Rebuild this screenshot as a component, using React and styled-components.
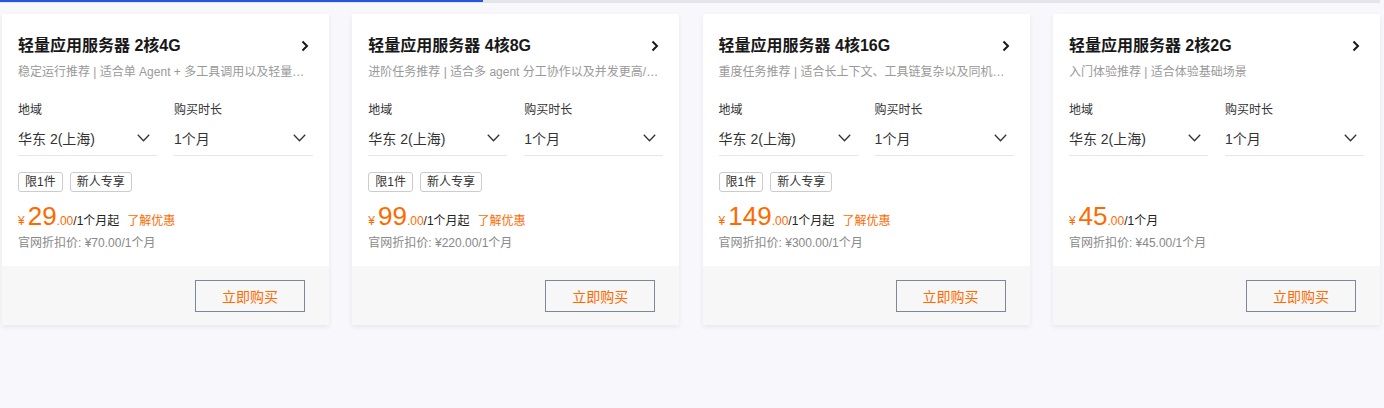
import React from 'react';
import styled, { createGlobalStyle } from 'styled-components';

const GlobalStyle = createGlobalStyle`
  html, body {
    margin: 0;
    padding: 0;
    background: #f8f8fc;
    font-family: "Liberation Sans", "Noto Sans CJK SC", sans-serif;
    color: #333;
  }
`;

const Page = styled.div`
  width: 1384px;
  height: 408px;
  background: #f8f8fc;
  overflow: hidden;
`;

const TopBar = styled.div`
  height: 3px;
  width: 1380px;
  background: #e4e5ea;
  display: flex;
`;

const TopBarFill = styled.div`
  width: 483px;
  height: 2px;
  background: #2456e0;
`;

const Grid = styled.div`
  display: grid;
  grid-template-columns: repeat(4, 327px);
  column-gap: 23.3px;
  padding: 11px 0 0 2px;
`;

const Card = styled.div`
  background: #fff;
  box-shadow: 0 2px 5px rgba(0, 0, 0, 0.07);
  display: flex;
  flex-direction: column;
`;

const Body = styled.div`
  padding: 20px 16px 14px 16px;
`;

const TitleRow = styled.div`
  display: flex;
  align-items: center;
  justify-content: space-between;
  height: 24px;
  padding-right: 4px;
`;

const Title = styled.div`
  font-size: 16px;
  font-weight: 700;
  color: #181818;
  line-height: 24px;
`;

const Subtitle = styled.div`
  margin-top: 4px;
  font-size: 12px;
  line-height: 20px;
  color: #999;
  white-space: nowrap;
  overflow: hidden;
  text-overflow: ellipsis;
`;

const Fields = styled.div`
  display: grid;
  grid-template-columns: 139px 139px;
  column-gap: 17px;
  margin-top: 18px;
`;

const Label = styled.div`
  font-size: 12px;
  line-height: 20px;
  color: #333;
`;

const Select = styled.div`
  margin-top: 2px;
  height: 32px;
  border-bottom: 1px solid #e6e6e6;
  display: flex;
  align-items: center;
  justify-content: space-between;
  padding: 0 7px 1px 0;
  font-size: 14px;
  color: #333;
`;

const Tags = styled.div`
  margin-top: 16px;
  height: 20px;
  display: flex;
  gap: 7px;
`;

const Tag = styled.span`
  height: 20px;
  box-sizing: border-box;
  border: 1px solid #ccc;
  border-radius: 3px;
  padding: 0 6px;
  font-size: 12px;
  line-height: 18px;
  color: #333;
`;

const PriceRow = styled.div`
  margin-top: 11px;
  display: flex;
  align-items: baseline;
  height: 26px;
  color: #ff6a00;
`;

const Yen = styled.span`
  font-size: 12px;
  margin-right: 3px;
`;

const Big = styled.span`
  font-size: 26px;
  line-height: 26px;
`;

const Small = styled.span`
  font-size: 12px;
`;

const Unit = styled.span`
  font-size: 12px;
  color: #222;
`;

const Promo = styled.a`
  font-size: 12px;
  color: #ff6a00;
  margin-left: 8px;
  text-decoration: none;
`;

const Official = styled.div`
  margin-top: 5px;
  font-size: 12px;
  line-height: 18px;
  color: #888;
`;

const Footer = styled.div`
  background: #f7f7f7;
  padding: 14px 24px 13px;
  display: flex;
  justify-content: flex-end;
`;

const BuyButton = styled.button`
  width: 110px;
  height: 32px;
  background: transparent;
  border: 1px solid #7d8799;
  color: #ff6a00;
  font-family: inherit;
  font-size: 14px;
  cursor: pointer;
`;

const Chevron = () => (
  <svg width="8" height="12" viewBox="0 0 8 12">
    <polyline points="1.5,1.5 6,6 1.5,10.5" fill="none" stroke="#181818" strokeWidth="2" />
  </svg>
);

const Caret = () => (
  <svg width="13" height="8" viewBox="0 0 13 8">
    <polyline points="0.8,0.8 6.5,6.8 12.2,0.8" fill="none" stroke="#333" strokeWidth="1.3" />
  </svg>
);

const plans = [
  {
    title: '轻量应用服务器 2核4G',
    desc: '稳定运行推荐 | 适合单 Agent + 多工具调用以及轻量级 RAG 应用场景',
    price: '29', suffix: '/1个月起', promo: true, official: '¥70.00/1个月',
  },
  {
    title: '轻量应用服务器 4核8G',
    desc: '进阶任务推荐 | 适合多 agent 分工协作以及并发更高/数据更多的应用场景',
    price: '99', suffix: '/1个月起', promo: true, official: '¥220.00/1个月',
  },
  {
    title: '轻量应用服务器 4核16G',
    desc: '重度任务推荐 | 适合长上下文、工具链复杂以及同机部署多服务的场景',
    price: '149', suffix: '/1个月起', promo: true, official: '¥300.00/1个月',
  },
  {
    title: '轻量应用服务器 2核2G',
    desc: '入门体验推荐 | 适合体验基础场景',
    price: '45', suffix: '/1个月', promo: false, official: '¥45.00/1个月',
  },
];

function PlanCard({ plan }) {
  return (
    <Card>
      <Body>
        <TitleRow>
          <Title>{plan.title}</Title>
          <Chevron />
        </TitleRow>
        <Subtitle>{plan.desc}</Subtitle>
        <Fields>
          <div>
            <Label>地域</Label>
            <Select>华东 2(上海)<Caret /></Select>
          </div>
          <div>
            <Label>购买时长</Label>
            <Select>1个月<Caret /></Select>
          </div>
        </Fields>
        <Tags>
          {plan.promo && <Tag>限1件</Tag>}
          {plan.promo && <Tag>新人专享</Tag>}
        </Tags>
        <PriceRow>
          <Yen>¥</Yen>
          <Big>{plan.price}</Big>
          <Small>.00</Small>
          <Unit>{plan.suffix}</Unit>
          {plan.promo && <Promo href="#">了解优惠</Promo>}
        </PriceRow>
        <Official>官网折扣价: {plan.official}</Official>
      </Body>
      <Footer>
        <BuyButton>立即购买</BuyButton>
      </Footer>
    </Card>
  );
}

export default function App() {
  return (
    <Page>
      <GlobalStyle />
      <TopBar>
        <TopBarFill />
      </TopBar>
      <Grid>
        {plans.map((p) => <PlanCard key={p.title} plan={p} />)}
      </Grid>
    </Page>
  );
}
